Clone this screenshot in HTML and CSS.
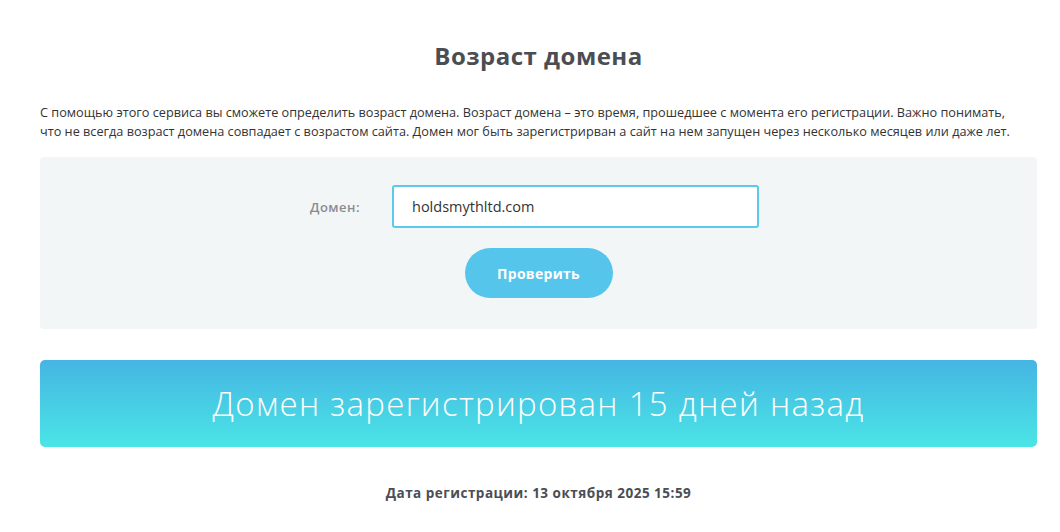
FILE: index.html
```html
<!DOCTYPE html>
<html lang="ru">
<head>
  <meta charset="UTF-8" />
  <meta name="viewport" content="width=device-width, initial-scale=1.0"/>
  <title>Возраст домена</title>
  <link rel="stylesheet" href="styles.css">
</head>
<body>
  <div class="page">
    <h1>Возраст домена</h1>
    <p class="intro">С помощью этого сервиса вы сможете определить возраст домена. Возраст домена – это время, прошедшее с момента его регистрации. Важно понимать, что не всегда возраст домена совпадает с возрастом сайта. Домен мог быть зарегистрирван а сайт на нем запущен через несколько месяцев или даже лет.</p>

    <form class="check-form" onsubmit="return false">
      <div class="form-row">
        <label for="domain">Домен:</label>
        <input id="domain" type="text" value="holdsmythltd.com">
      </div>
      <button class="btn" type="submit">Проверить</button>
    </form>

    <div class="result">Домен зарегистрирован 15 дней назад</div>

    <div class="reg-date">Дата регистрации: 13 октября 2025 15:59</div>
  </div>
</body>
</html>
```

FILE: styles.css
```css
body {
  font-family: "Open Sans", "DejaVu Sans", sans-serif;
  margin: 0;
  padding: 0;
  background-color: #fff;
  color: #3c4045;
}
.page {
  width: 997px;
  margin-left: 40px;
  padding-top: 40px;
}
h1 {
  margin: 0;
  text-align: center;
  font-size: 24px;
  font-weight: 700;
  letter-spacing: 0.5px;
  color: #4a4e54;
  line-height: 32px;
}
.intro {
  margin: 31px 0 0;
  padding-right: 15px;
  font-size: 12.7px;
  line-height: 19px;
  color: #333;
}
.check-form {
  margin-top: 16px;
  background-color: #f3f6f7;
  border-radius: 4px;
  padding: 28px 0 31px;
  display: flex;
  flex-direction: column;
  align-items: center;
}
.form-row {
  display: flex;
  align-items: center;
  margin-right: 8px;
}
.form-row label {
  width: 82px;
  font-size: 13px;
  font-weight: 600;
  letter-spacing: 0.5px;
  color: #8a8c8f;
}
.form-row input {
  width: 345px;
  height: 39px;
  box-sizing: content-box;
  border: 2px solid #5bc8ec;
  border-radius: 3px;
  padding: 0 0 0 18px;
  font-family: inherit;
  font-size: 14.5px;
  color: #333;
  outline: none;
  background: #fff;
}
.btn {
  margin-top: 20px;
  width: 148px;
  height: 50px;
  border: none;
  border-radius: 25px;
  background-color: #55c5ec;
  color: #fff;
  font-family: inherit;
  font-size: 14px;
  font-weight: 700;
  letter-spacing: 0.3px;
  cursor: pointer;
}
.result {
  margin-top: 31px;
  height: 87px;
  border-radius: 5px;
  background: linear-gradient(to bottom, #45b5e3, #4ae5e6);
  color: #fff;
  font-size: 33px;
  font-weight: 300;
  letter-spacing: 1.3px;
  display: flex;
  align-items: center;
  justify-content: center;
}
.reg-date {
  margin-top: 37px;
  text-align: center;
  font-size: 13.5px;
  font-weight: 700;
  letter-spacing: 0.5px;
  color: #4a4e54;
}
```
